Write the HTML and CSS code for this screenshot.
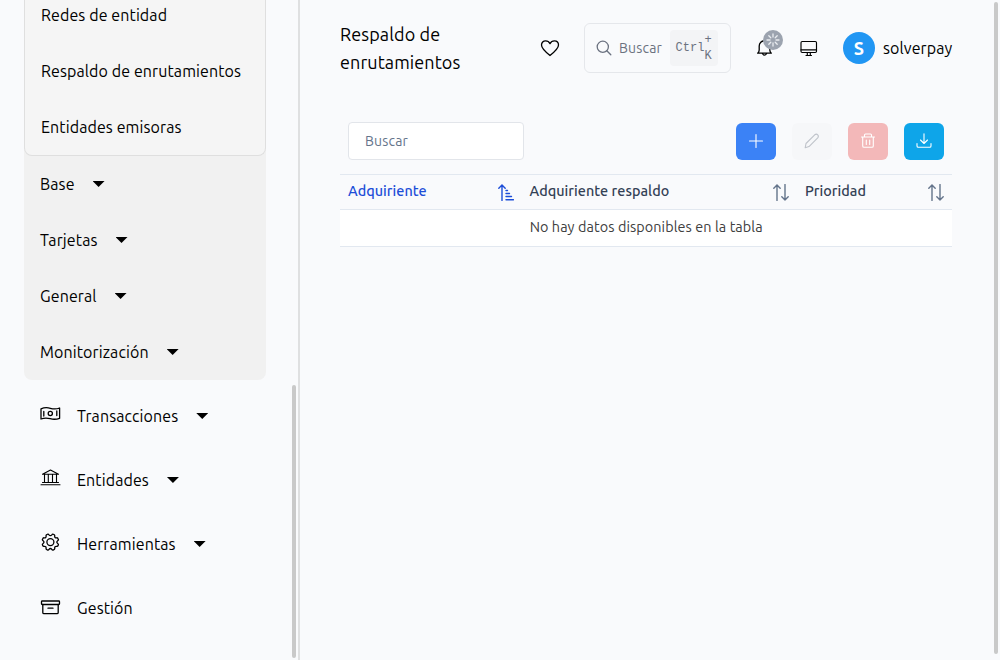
FILE: index.html
```html
<!DOCTYPE html>
<html lang="es">
<head>
<meta charset="utf-8">
<title>Respaldo de enrutamientos</title>
<link rel="stylesheet" href="styles.css">
</head>
<body>
<div class="app">
  <aside class="sidebar">
    <div class="group">
      <div class="subgroup">
        <a class="item"><span>Redes de entidad</span></a>
        <a class="item"><span>Respaldo de enrutamientos</span></a>
        <a class="item"><span>Entidades emisoras</span></a>
      </div>
      <a class="item"><span>Base</span><i class="caret"></i></a>
      <a class="item"><span>Tarjetas</span><i class="caret"></i></a>
      <a class="item"><span>General</span><i class="caret"></i></a>
      <a class="item"><span>Monitorización</span><i class="caret"></i></a>
    </div>
    <nav class="menu">
      <a class="entry"><svg class="mi" viewBox="0 0 21 20"><path d="M1 3.800Q5.600 1.900 10.400 3.300T19.600 3V13.300Q15 15 10.200 13.700T1 14z"/><circle cx="10.300" cy="8.500" r="2.100"/><path d="M3.800 6.400v4.600M16.800 6v4.600"/></svg><span>Transacciones</span><i class="caret"></i></a>
      <a class="entry"><svg class="mi bank" viewBox="0 0 21 20"><path d="M2.500 5.200 10.500 1l8 4.200zM4.500 5.500v8M8.300 5.500v8M12.500 5.500v8M16.500 5.500v8M2.500 13.500h16M1 15.800h19"/></svg><span>Entidades</span><i class="caret"></i></a>
      <a class="entry"><svg class="mi" viewBox="0 0 21 20"><path d="M7.300 1.300Q8.300.7 9 1.800 10.400 3.600 11.800 1.800q.7-1.100 1.700-.5 1.500.5 1.200 1.600-.2 2.100 1.900 1.900 1.100-.3 1.600 1.200.6 1-.5 1.700-1.800 1.400 0 2.800 1.100.7.5 1.700-.5 1.500-1.600 1.200-2.100-.2-1.900 1.900.3 1.100-1.200 1.600-1 .6-1.700-.5-1.400-1.800-2.800 0-.7 1.100-1.700.5-1.500-.5-1.200-1.600.2-2.100-1.900-1.900-1.100.3-1.600-1.200-.6-1 .5-1.700 1.800-1.400 0-2.800-1.100-.7-.5-1.700.5-1.500 1.600-1.200 2.100.2 1.900-1.900-.3-1.100 1.200-1.600z"/><circle cx="10.400" cy="9.100" r="3.500"/></svg><span>Herramientas</span><i class="caret"></i></a>
      <a class="entry"><svg class="mi" viewBox="0 0 21 20"><rect x="1.500" y="4" width="18" height="3.500" rx=".7"/><path d="M2.800 7.500v8q0 1.200 1.200 1.200h13q1.200 0 1.200-1.200v-8M8 11.200h5"/></svg><span>Gestión</span></a>
    </nav>
    <div class="thumb thumb-side"></div>
  </aside>
  <main class="main">
    <header class="top">
      <h1>Respaldo de<br>enrutamientos</h1>
      <svg class="heart" viewBox="0 0 20 18"><path d="M10 16.500C5 12.500 1.500 9.300 1.500 6 1.500 3.500 3.300 1.800 5.600 1.800c1.800 0 3.500 1 4.400 2.800.9-1.800 2.600-2.800 4.400-2.800 2.300 0 4.100 1.700 4.100 4.200 0 3.300-3.500 6.500-8.500 10.500z"/></svg>
      <div class="search">
        <svg class="lens" viewBox="0 0 16 16"><circle cx="6.800" cy="6.800" r="5.600"/><path d="m10.800 10.800 4 4"/></svg>
        <span class="search-label">Buscar</span>
        <kbd class="kbd"><span>Ctrl</span><span class="combo"><b>+</b><b>K</b></span></kbd>
      </div>
      <div class="bell">
        <svg viewBox="0 0 18 20"><path d="M1.700 15.200h13.600q-1.500-1.400-1.500-3.200V8a5.300 5.300 0 0 0-10.600 0v4q0 1.800-1.500 3.200zM6.300 15.500q2.200 3.200 4.400 0"/></svg>
        <span class="badge"><svg viewBox="0 0 20 20"><path d="M10 4v3M10 13v3M4 10h3M13 10h3M5.800 5.800l2 2M12.200 12.200l2 2M5.800 14.200l2-2M12.200 7.800l2-2"/></svg></span>
      </div>
      <svg class="monitor" viewBox="0 0 18 17"><rect x="1" y="1.500" width="15.500" height="11" rx="1.200"/><path d="M1 9.900h15.500M7.300 12.500v2.500M10.300 12.500v2.500M6 15.500h5.500"/></svg>
      <span class="avatar">S</span>
      <span class="user">solverpay</span>
    </header>
    <section class="panel">
      <div class="toolbar">
        <input class="filter" type="text" placeholder="Buscar" aria-label="Buscar">
        <div class="actions">
          <button class="btn add"><svg viewBox="0 0 16 16"><path d="M8 1.500v13M1.500 8h13"/></svg></button>
          <button class="btn edit"><svg viewBox="0 0 16 16"><path d="m2 10.500 8.700-8.700q1.700-1.300 3 0t0 3L5 13.600l-3.800 1.200z"/></svg></button>
          <button class="btn del"><svg viewBox="0 0 16 16"><path d="M1.500 4h13M4.500 4V2q0-1 1-1h5q1 0 1 1v2M2.700 4v9q0 1.300 1.300 1.300h8q1.300 0 1.300-1.300V4M6.300 7v4.500M9.700 7v4.500"/></svg></button>
          <button class="btn get"><svg viewBox="0 0 16 16"><path d="M8 .8v9.500M4.500 7 8 10.500 11.500 7M1 10.500v2.500q0 1.300 1.300 1.300h11.400q1.300 0 1.300-1.300v-2.500"/></svg></button>
        </div>
      </div>
      <div class="thead">
        <div class="th sorted"><span>Adquiriente</span><svg viewBox="0 0 16 17"><path d="M4 1v15.500M.8 4.300 4 1l3.200 3.300M8 6.500h1.500M8 9.500h3.500M8 12.500h5.500M8 15.700h7.500"/></svg></div>
        <div class="th"><span>Adquiriente respaldo</span><svg viewBox="0 0 16 17"><path d="M4 1v15.500M.8 4.300 4 1l3.200 3.300M12 .5V16M8.800 12.800 12 16l3.200-3.200"/></svg></div>
        <div class="th"><span>Prioridad</span><svg viewBox="0 0 16 17"><path d="M4 1v15.500M.8 4.300 4 1l3.200 3.300M12 .5V16M8.800 12.800 12 16l3.200-3.200"/></svg></div>
      </div>
      <div class="empty"><span>No hay datos disponibles en la tabla</span></div>
    </section>
    <div class="thumb thumb-page"></div>
  </main>
</div>
</body>
</html>
```
FILE: styles.css
```css
* { box-sizing: border-box; }
body { margin: 0; background: #f9fafc; color: #000; font: 16px/24px Ubuntu, "Noto Sans", sans-serif; letter-spacing: .1px; overflow: hidden; }
svg { display: block; flex: none; fill: none; stroke: currentColor; stroke-width: 1.3; stroke-linejoin: round; stroke-linecap: round; }
.app { display: grid; grid-template-columns: 300px 1fr; height: 660px; }
.sidebar { position: relative; border-right: 2px solid #dfe0e1; padding: 0 32px 0 24px; overflow: hidden; }
.group { background: #f1f1f1; border-radius: 0 0 8px 8px; }
.subgroup { height: 156px; display: flex; flex-direction: column; justify-content: flex-end; background: #f5f5f5; border: 1px solid #dfdfdf; border-top: 0; border-radius: 0 0 8px 8px; }
.item { display: flex; align-items: center; height: 56px; flex: none; padding-left: 16px; white-space: nowrap; }
.caret { width: 12px; height: 6px; margin-left: 18px; background: #000; clip-path: polygon(0 0, 100% 0, 50% 100%); }
.menu { padding: 4px 0 0 16px; }
.entry { display: flex; align-items: center; height: 64px; }
.mi { width: 21px; height: 20px; margin: -3px 16px 0 0; }
.bank { stroke-width: 1.1; }
.thumb { position: absolute; border-radius: 3px; background: #c9c9c9; width: 4px; }
.thumb-side { left: 292px; top: 385px; height: 273px; }
.main { position: relative; padding: 0 48px 0 40px; }
.top { display: flex; align-items: center; height: 96px; }
h1 { margin: 0; width: 200px; font-size: 18px; font-weight: 400; line-height: 28px; }
.heart { width: 20px; height: 18px; }
.search { display: flex; align-items: center; width: 147px; height: 50px; margin-left: 24px; padding: 0 12px 0 11px; border: 1px solid #e5e7eb; border-radius: 6px; color: #6b7280; }
.lens { width: 16px; height: 16px; }
.search-label { width: 44px; margin: 0 8px 0 7px; font-size: 14px; letter-spacing: .2px; }
.kbd { display: flex; align-items: center; justify-content: center; width: 48px; height: 36px; flex: none; padding-right: 1px; border-radius: 4px; background: #f3f4f6; font: 12px/16px "Liberation Mono", monospace; }
.combo { display: flex; flex-direction: column; }
.combo b { font-weight: 400; }
.bell { position: relative; margin-left: 25px; }
.bell > svg { width: 18px; height: 20px; }
.badge { position: absolute; left: 7px; top: -8px; width: 20px; height: 20px; border-radius: 50%; background: #9ca3af; color: #e9ecf0; }
.monitor { width: 18px; height: 17px; margin-left: 26px; stroke-width: 1.15; }
.avatar { width: 32px; height: 32px; margin-left: 25px; border-radius: 50%; background: #2196f3; color: #fff; font-size: 18px; font-weight: 700; line-height: 32px; text-align: center; }
.user { margin-left: 8px; white-space: nowrap; }
.toolbar { display: flex; justify-content: space-between; align-items: flex-start; height: 78px; padding: 26px 8px 0; }
.filter { width: 176px; height: 38px; border: 1px solid #e2e5ea; border-radius: 4px; padding: 0 16px; background: #fff; font: 14px Ubuntu, "Noto Sans", sans-serif; letter-spacing: .2px; }
.filter::placeholder { color: #64748b; opacity: 1; }
.actions { display: flex; gap: 16px; padding-top: 1px; }
.btn { display: grid; place-items: center; width: 40px; height: 37px; border: 0; border-radius: 6px; padding: 0; color: #fff; }
.btn svg { width: 16px; height: 16px; margin-top: -1px; stroke-width: 1.1; }
.add { background: #3b82f6; }
.edit { background: #f6f7f9; color: #bfc3ca; }
.del { background: #f3b8b9; }
.get { background: #0ea5e9; }
.thead { display: grid; grid-template-columns: 181.500px 275.500px 155px; height: 36px; border-top: 1px solid #e2e8f0; border-bottom: 1px solid #e2e8f0; }
.th { display: flex; align-items: center; justify-content: space-between; padding: 0 8px; color: #334155; font-size: 14.400px; font-weight: 500; letter-spacing: .04px; white-space: nowrap; }
.th span { margin-top: -3px; }
.th svg { width: 16px; height: 17px; color: #64748b; stroke-width: 1.4; }
.sorted, .sorted svg { color: #1d4ed8; }
.empty { height: 37px; background: #fff; border-bottom: 1px solid #e2e8f0; color: #404040; font-size: 14.400px; letter-spacing: .08px; line-height: 34px; text-align: center; }
.thumb-page { left: 694px; top: 2px; height: 652px; }
```
